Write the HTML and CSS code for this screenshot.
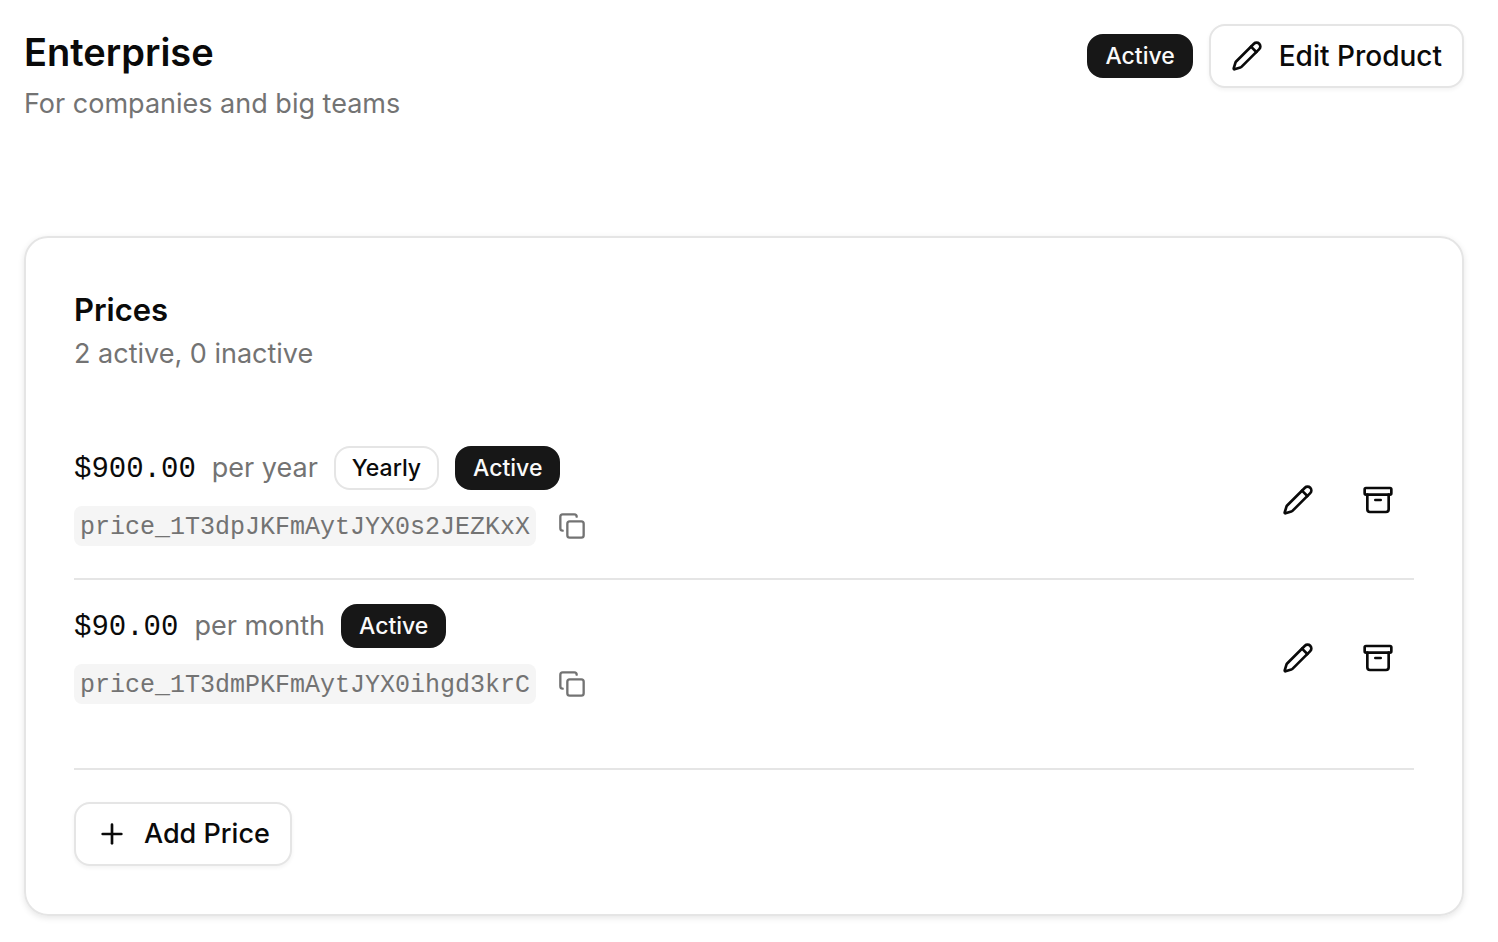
FILE: index.html
```html
<!DOCTYPE html>
<html lang="en">
<head>
<meta charset="utf-8">
<meta name="viewport" content="width=device-width, initial-scale=1">
<title>Enterprise</title>
<link rel="stylesheet" href="styles.css">
</head>
<body>
<svg class="sprite" aria-hidden="true">
  <symbol id="pencil" viewBox="0 0 24 24"><path d="M21.174 6.812a1 1 0 0 0-3.986-3.987L3.842 16.174a2 2 0 0 0-.5.83l-1.321 4.352a.5.5 0 0 0 .623.622l4.353-1.32a2 2 0 0 0 .83-.497z"/><path d="m15 5 4 4"/></symbol>
  <symbol id="archive" viewBox="0 0 24 24"><rect width="20" height="5" x="2" y="3" rx="1"/><path d="M4 8v11a2 2 0 0 0 2 2h12a2 2 0 0 0 2-2V8"/><path d="M10 12h4"/></symbol>
  <symbol id="copy" viewBox="0 0 24 24"><rect width="14" height="14" x="8" y="8" rx="2"/><path d="M4 16c-1.1 0-2-.9-2-2V4c0-1.1.9-2 2-2h10c1.1 0 2 .9 2 2"/></symbol>
  <symbol id="plus" viewBox="0 0 24 24"><path d="M5 12h14"/><path d="M12 5v14"/></symbol>
</svg>
<main class="page">
  <header class="page-header">
    <div>
      <h1 class="title">Enterprise</h1>
      <p class="description">For companies and big teams</p>
    </div>
    <div class="header-actions">
      <span class="badge badge-solid">Active</span>
      <button class="button" type="button"><svg class="icon"><use href="#pencil"/></svg>Edit Product</button>
    </div>
  </header>
  <section class="card">
    <h2 class="card-title">Prices</h2>
    <p class="description">2 active, 0 inactive</p>
    <ul class="prices">
      <li class="price">
        <div class="price-info">
          <div class="price-line">
            <span class="amount">$900.00</span>
            <span class="interval">per year</span>
            <span class="badge">Yearly</span>
            <span class="badge badge-solid">Active</span>
          </div>
          <div class="id-line">
            <code class="price-id">price_1T3dpJKFmAytJYX0s2JEZKxX</code>
            <button class="copy-button" type="button" aria-label="Copy price ID"><svg class="icon icon-small"><use href="#copy"/></svg></button>
          </div>
        </div>
        <div class="price-actions">
          <button class="icon-button" type="button" aria-label="Edit price"><svg class="icon"><use href="#pencil"/></svg></button>
          <button class="icon-button" type="button" aria-label="Archive price"><svg class="icon"><use href="#archive"/></svg></button>
        </div>
      </li>
      <li class="price">
        <div class="price-info">
          <div class="price-line">
            <span class="amount">$90.00</span>
            <span class="interval">per month</span>
            <span class="badge badge-solid">Active</span>
          </div>
          <div class="id-line">
            <code class="price-id">price_1T3dmPKFmAytJYX0ihgd3krC</code>
            <button class="copy-button" type="button" aria-label="Copy price ID"><svg class="icon icon-small"><use href="#copy"/></svg></button>
          </div>
        </div>
        <div class="price-actions">
          <button class="icon-button" type="button" aria-label="Edit price"><svg class="icon"><use href="#pencil"/></svg></button>
          <button class="icon-button" type="button" aria-label="Archive price"><svg class="icon"><use href="#archive"/></svg></button>
        </div>
      </li>
    </ul>
    <div class="card-footer">
      <button class="button" type="button"><svg class="icon"><use href="#plus"/></svg>Add Price</button>
    </div>
  </section>
</main>
</body>
</html>
```
FILE: styles.css
```css
* { box-sizing: border-box; }

body {
  margin: 0;
  background: #fff;
  color: #0a0a0a;
  font-family: Inter, "Liberation Sans", sans-serif;
  font-size: 27px;
  line-height: 40px;
}

h1, h2, p, ul { margin: 0; padding: 0; }

button {
  font: inherit;
  color: inherit;
  cursor: pointer;
}

.sprite { display: none; }

.page { padding: 24px 34px 24px 24px; }

.page-header {
  display: flex;
  justify-content: space-between;
  align-items: flex-start;
  gap: 24px;
  margin-bottom: 112px;
}

.title {
  margin-bottom: 4px;
  font-size: 38px;
  font-weight: 600;
  line-height: 56px;
}

.description, .interval { color: #737373; }

.header-actions {
  display: flex;
  align-items: center;
  gap: 16px;
}

.header-actions .button { font-size: 28px; }

.badge {
  display: inline-flex;
  align-items: center;
  height: 44px;
  padding: 0 16px;
  border: 2px solid #e5e5e5;
  border-radius: 16px;
  font-size: 23px;
  font-weight: 500;
}

.badge-solid {
  border-color: #171717;
  background: #171717;
  color: #fafafa;
}

.button {
  display: inline-flex;
  align-items: center;
  gap: 16px;
  height: 64px;
  padding: 0 20px;
  border: 2px solid #e5e5e5;
  border-radius: 16px;
  background: #fff;
  box-shadow: 0 2px 4px rgb(0 0 0 / 5%);
  font-weight: 500;
}

.icon {
  flex: none;
  width: 32px;
  height: 32px;
  fill: none;
  stroke: currentColor;
  stroke-width: 2;
  stroke-linecap: round;
  stroke-linejoin: round;
}

.icon-small {
  width: 28px;
  height: 28px;
}

.card {
  padding: 48px;
  border: 2px solid #e5e5e5;
  border-radius: 24px;
  box-shadow: 0 2px 6px rgb(0 0 0 / 10%);
}

.card-title {
  font-size: 31px;
  font-weight: 600;
  line-height: 48px;
}

.prices {
  margin: 48px 0 32px;
  list-style: none;
}

.price {
  display: flex;
  justify-content: space-between;
  align-items: center;
  padding: 24px 0;
}

.price + .price { border-top: 2px solid #e5e5e5; }

.price-info {
  display: grid;
  gap: 16px;
  padding-bottom: 8px;
}

.price-line, .id-line {
  display: flex;
  align-items: center;
  gap: 16px;
}

.amount, .price-id {
  padding-top: 4px;
  font-family: "Liberation Mono", monospace;
  line-height: 36px;
}

.amount { font-size: 29px; }

.price-id {
  padding-right: 6px;
  padding-left: 6px;
  border-radius: 8px;
  background: #f5f5f5;
  color: #737373;
  font-size: 25px;
}

.copy-button, .icon-button {
  display: grid;
  place-items: center;
  padding: 0;
  border: 0;
  background: none;
}

.copy-button {
  width: 40px;
  height: 40px;
  color: #737373;
}

.icon-button {
  width: 72px;
  height: 64px;
}

.price-actions {
  display: flex;
  gap: 8px;
}

.card-footer {
  padding-top: 32px;
  border-top: 2px solid #e5e5e5;
}

.card-footer .button { display: flex; }
```
